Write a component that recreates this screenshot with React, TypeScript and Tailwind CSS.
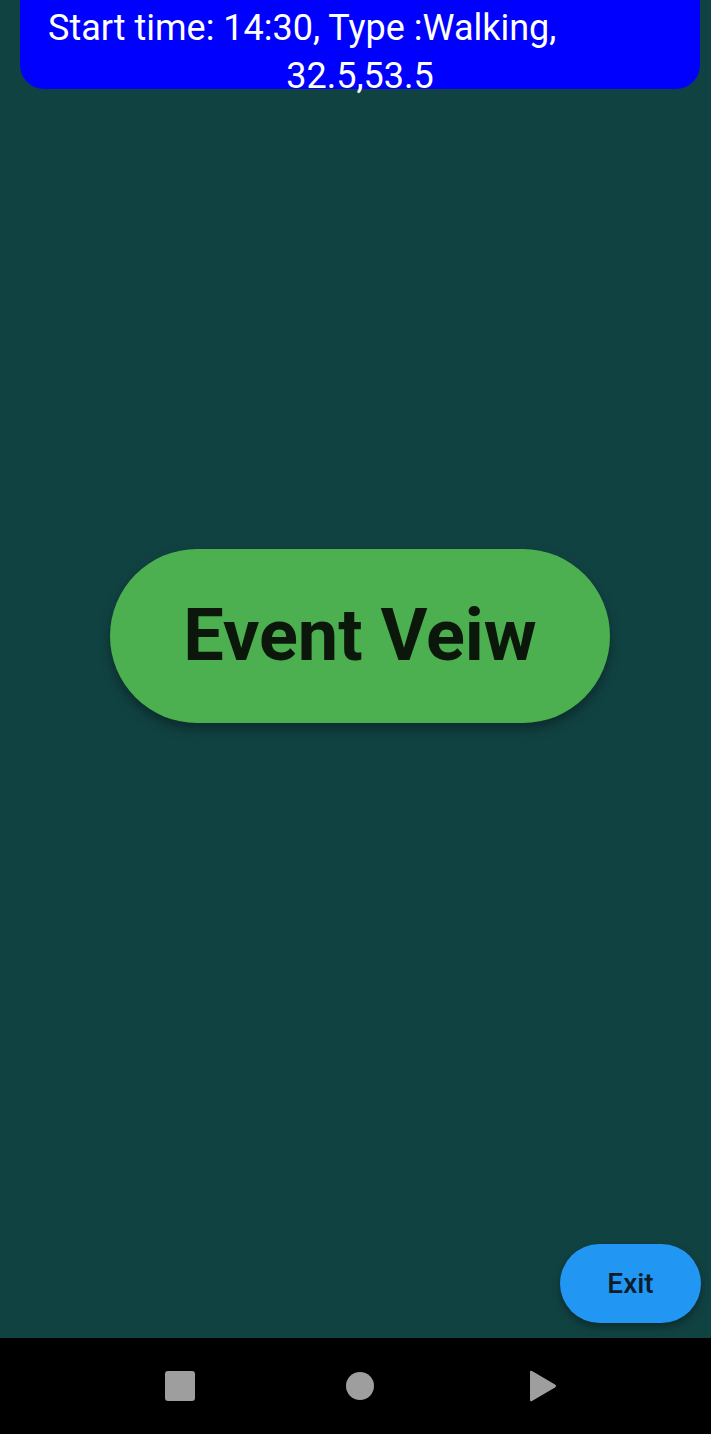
export default function App() {
  return (
    <div className="flex h-[1434px] w-[711px] flex-col bg-[#114242] font-['Roboto',sans-serif]">
      <div className="ml-[20px] mr-[11px] h-[89px] rounded-b-[24px] bg-[#0000ff] text-[36px] leading-[48px] text-white">
        <div className="pl-[28px] pt-[4px] whitespace-nowrap">Start time: 14:30, Type :Walking,</div>
        <div className="text-center">32.5,53.5</div>
      </div>

      <div className="mt-[460px] flex pl-[110px]">
        <button className="flex h-[174px] w-[500px] items-center justify-center rounded-full bg-[#4caf50] text-[72px] font-bold text-[#0b170b] shadow-[0_6px_12px_rgba(0,0,0,0.35)]">
          Event Veiw
        </button>
      </div>

      <div className="flex-1" />

      <div className="mb-[15px] mr-[10px] flex justify-end">
        <button className="flex h-[79px] w-[141px] items-center justify-center rounded-full bg-[#2196f3] text-[28px] font-medium text-[#0e1c29] shadow-[0_4px_8px_rgba(0,0,0,0.35)]">
          Exit
        </button>
      </div>

      <div className="flex h-[96px] items-center bg-black pl-[165px]">
        <div className="h-[30px] w-[30px] rounded-[3px] bg-[#9e9e9e]" />
        <div className="ml-[151px] h-[28px] w-[28px] rounded-full bg-[#9e9e9e]" />
        <svg className="ml-[154px]" width="30" height="34" viewBox="0 0 30 34">
          <path d="M2 3 Q2 1 4 2 L27 15.5 Q29 17 27 18.5 L4 32 Q2 33 2 31 Z" fill="#9e9e9e" />
        </svg>
      </div>
    </div>
  );
}
